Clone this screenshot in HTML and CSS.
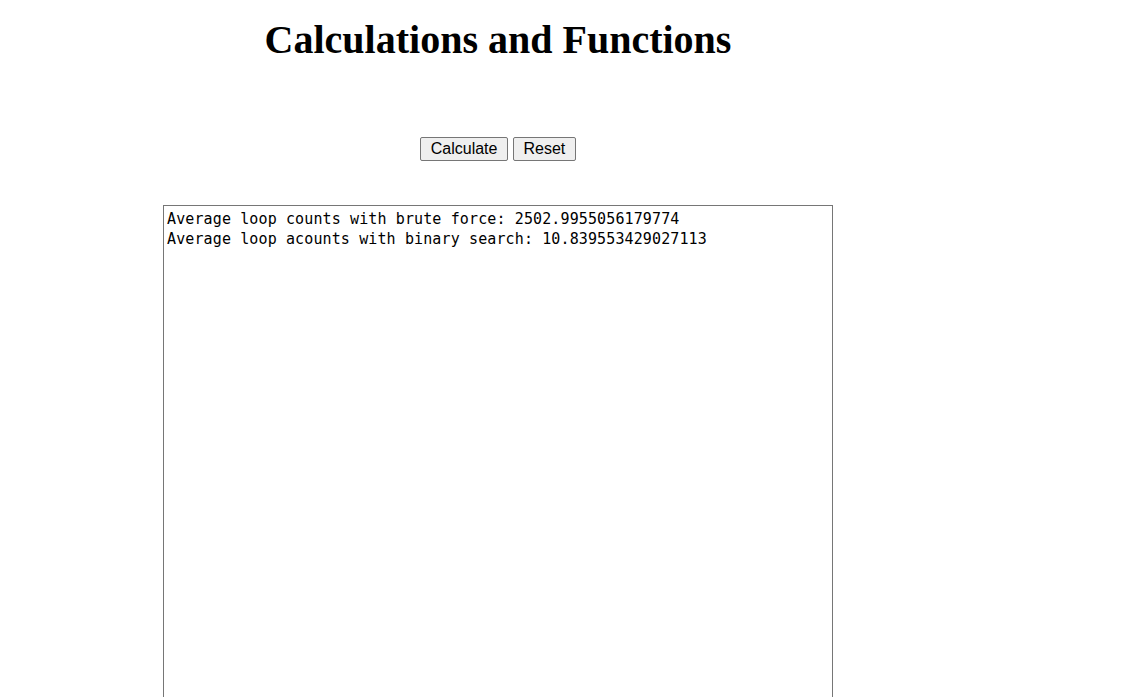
FILE: index.html
```html
<!DOCTYPE html>
<html>
<head>
<meta charset="utf-8">
<title>Calculations and Functions</title>
<link rel="stylesheet" href="styles.css">
</head>
<body>
<div class="page">
  <h1 class="title">Calculations and Functions</h1>
  <div class="controls">
    <button class="btn">Calculate</button>
    <button class="btn">Reset</button>
  </div>
  <textarea class="output">Average loop counts with brute force: 2502.9955056179774
Average loop acounts with binary search: 10.839553429027113</textarea>
</div>
</body>
</html>
```
FILE: styles.css
```css
html, body {
  margin: 0;
  padding: 0;
  background: #fff;
}
body {
  padding: 0 8px;
  font-family: "Liberation Serif", "Times New Roman", serif;
  overflow: hidden;
}
.page {
  width: 980px;
  display: flex;
  flex-direction: column;
  align-items: center;
}
.title {
  font-family: "Liberation Serif", "Times New Roman", serif;
  font-weight: bold;
  font-size: 40px;
  line-height: 46px;
  margin: 17px 0 0 0;
  color: #000;
}
.controls {
  margin-top: 74px;
  display: flex;
  gap: 5px;
}
.btn {
  font-family: "Liberation Sans", Arial, sans-serif;
  font-size: 16px;
  height: 24px;
  padding: 0 9.5px;
  background: #efefef;
  border: 1px solid #767676;
  border-radius: 2px;
  color: #000;
}
.output {
  margin-top: 44px;
  width: 670px;
  height: 600px;
  box-sizing: border-box;
  border: 1px solid #767676;
  padding: 3px 3px 2px 3px;
  font-family: "DejaVu Sans Mono", monospace;
  font-size: 15px;
  letter-spacing: 0.12px;
  line-height: 20px;
  resize: none;
  color: #000;
  outline: none;
}
```
